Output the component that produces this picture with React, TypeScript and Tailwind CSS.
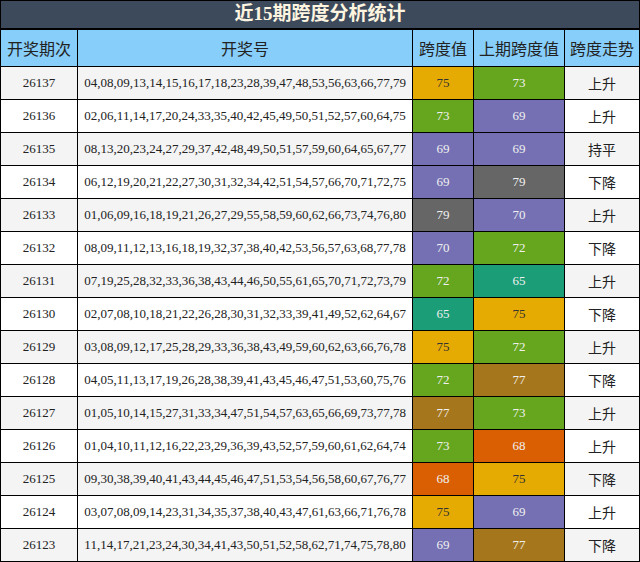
const rows: [string, string, number, number, string][] = [
  ['26137', '04,08,09,13,14,15,16,17,18,23,28,39,47,48,53,56,63,66,77,79', 75, 73, '上升'],
  ['26136', '02,06,11,14,17,20,24,33,35,40,42,45,49,50,51,52,57,60,64,75', 73, 69, '上升'],
  ['26135', '08,13,20,23,24,27,29,37,42,48,49,50,51,57,59,60,64,65,67,77', 69, 69, '持平'],
  ['26134', '06,12,19,20,21,22,27,30,31,32,34,42,51,54,57,66,70,71,72,75', 69, 79, '下降'],
  ['26133', '01,06,09,16,18,19,21,26,27,29,55,58,59,60,62,66,73,74,76,80', 79, 70, '上升'],
  ['26132', '08,09,11,12,13,16,18,19,32,37,38,40,42,53,56,57,63,68,77,78', 70, 72, '下降'],
  ['26131', '07,19,25,28,32,33,36,38,43,44,46,50,55,61,65,70,71,72,73,79', 72, 65, '上升'],
  ['26130', '02,07,08,10,18,21,22,26,28,30,31,32,33,39,41,49,52,62,64,67', 65, 75, '下降'],
  ['26129', '03,08,09,12,17,25,28,29,33,36,38,43,49,59,60,62,63,66,76,78', 75, 72, '上升'],
  ['26128', '04,05,11,13,17,19,26,28,38,39,41,43,45,46,47,51,53,60,75,76', 72, 77, '下降'],
  ['26127', '01,05,10,14,15,27,31,33,34,47,51,54,57,63,65,66,69,73,77,78', 77, 73, '上升'],
  ['26126', '01,04,10,11,12,16,22,23,29,36,39,43,52,57,59,60,61,62,64,74', 73, 68, '上升'],
  ['26125', '09,30,38,39,40,41,43,44,45,46,47,51,53,54,56,58,60,67,76,77', 68, 75, '下降'],
  ['26124', '03,07,08,09,14,23,31,34,35,37,38,40,43,47,61,63,66,71,76,78', 75, 69, '上升'],
  ['26123', '11,14,17,21,23,24,30,34,41,43,50,51,52,58,62,71,74,75,78,80', 69, 77, '下降'],
]

const spanColor: Record<number, string> = {
  65: 'bg-[#1b9e77] text-[#f0f0f0]',
  68: 'bg-[#d95f02] text-[#f0f0f0]',
  69: 'bg-[#7570b3] text-[#f0f0f0]',
  70: 'bg-[#7570b3] text-[#f0f0f0]',
  72: 'bg-[#66a61e] text-[#f0f0f0]',
  73: 'bg-[#66a61e] text-[#f0f0f0]',
  75: 'bg-[#e6ab02] text-[#333]',
  77: 'bg-[#a6761d] text-[#f0f0f0]',
  79: 'bg-[#666666] text-[#f0f0f0]',
}

const serif = 'font-[Liberation_Serif,Noto_Sans_CJK_SC,serif]'
const cjk = 'font-[Noto_Sans_CJK_SC,sans-serif]'

export default function App() {
  return (
    <div className="w-[640px] h-[562px] bg-white text-[#222]">
      <div className={`h-[29px] bg-[#3d4a5c] border border-black flex items-center justify-center text-[#fdf5e0] text-[19px] font-bold ${serif}`}>
        近15期跨度分析统计
      </div>
      <table className={`w-full border-collapse table-fixed text-[13px] ${serif}`}>
        <colgroup>
          <col className="w-[77px]" />
          <col className="w-[335px]" />
          <col className="w-[61px]" />
          <col className="w-[91px]" />
          <col />
        </colgroup>
        <thead>
          <tr className={`h-[37px] bg-[#87cefa] text-[16px] ${cjk}`}>
            {['开奖期次', '开奖号', '跨度值', '上期跨度值', '跨度走势'].map((h) => (
              <th key={h} className="border border-black font-normal">{h}</th>
            ))}
          </tr>
        </thead>
        <tbody>
          {rows.map(([id, nums, span, prev, trend], i) => (
            <tr key={id} className={`h-[33px] ${i % 2 === 0 ? 'bg-[#f4f4f4]' : 'bg-white'}`}>
              <td className={`border border-black text-center ${serif}`}>{id}</td>
              <td className={`border border-black text-center whitespace-nowrap ${serif}`}>{nums}</td>
              <td className={`border border-black text-center ${serif} ${spanColor[span]}`}>{span}</td>
              <td className={`border border-black text-center ${serif} ${spanColor[prev]}`}>{prev}</td>
              <td className={`border border-black text-center text-[14px] ${cjk}`}>{trend}</td>
            </tr>
          ))}
        </tbody>
      </table>
    </div>
  )
}
